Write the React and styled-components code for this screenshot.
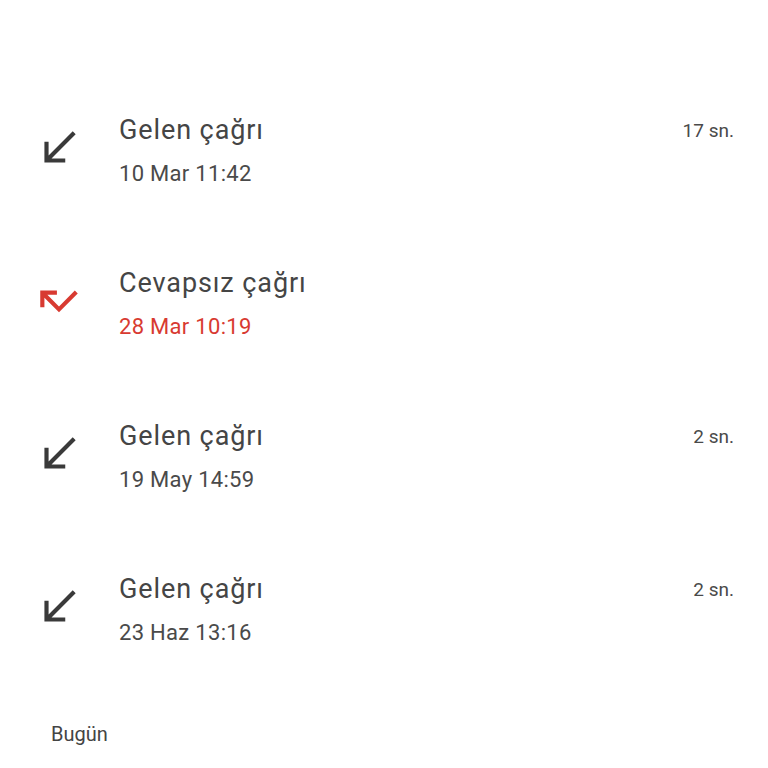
import React from 'react';
import styled, { createGlobalStyle } from 'styled-components';

const GlobalStyle = createGlobalStyle`
  html, body {
    margin: 0;
    padding: 0;
    background: #ffffff;
  }
  body {
    font-family: Roboto, "Noto Sans", sans-serif;
  }
`;

const PAGE = styled.div`
  width: 768px;
  height: 768px;
  box-sizing: border-box;
  padding: 75px 34px 0 34px;
  background: #ffffff;
  overflow: hidden;
`;

const ROW = styled.div`
  display: flex;
  align-items: center;
  height: 153px;
`;

const ICON = styled.svg`
  width: 50px;
  height: 50px;
  flex-shrink: 0;
  margin-right: 35px;
  margin-bottom: 7px;
  fill: ${(p) => (p.missed ? '#d83a31' : '#3a3a3a')};
`;

const BODY = styled.div`
  flex: 1;
  display: flex;
  flex-direction: column;
`;

const TOPLINE = styled.div`
  display: flex;
  justify-content: space-between;
  align-items: center;
  height: 43px;
`;

const TITLE = styled.span`
  font-size: 27px;
  color: #454545;
  letter-spacing: 0.9px;
`;

const DURATION = styled.span`
  font-size: 19px;
  color: #4a4a4a;
`;

const DATE = styled.div`
  font-size: 22px;
  line-height: 43px;
  color: ${(p) => (p.missed ? '#d83a31' : '#4a4a4a')};
  letter-spacing: 0.3px;
`;

const SECTION = styled.div`
  margin-top: 35px;
  padding-left: 17px;
  font-size: 20px;
  line-height: 24px;
  color: #444444;
`;

const calls = [
  { title: 'Gelen çağrı', date: '10 Mar 11:42', duration: '17 sn.' },
  { title: 'Cevapsız çağrı', date: '28 Mar 10:19', missed: true },
  { title: 'Gelen çağrı', date: '19 May 14:59', duration: '2 sn.' },
  { title: 'Gelen çağrı', date: '23 Haz 13:16', duration: '2 sn.' },
];

const CallIcon = ({ missed }) => (
  <ICON viewBox='0 0 24 24' missed={missed}>
    {missed ? (
      <path d='M19.59 7L12 14.59 6.41 9H11V7H3v8h2v-4.59l7 7 9-9z' />
    ) : (
      <path d='M20 5.41L18.59 4 7 15.59V9H5v10h10v-2H8.41z' />
    )}
  </ICON>
);

const App = () => {
  return (
    <PAGE>
      <GlobalStyle />
      {calls.map((c, i) => (
        <ROW key={i}>
          <CallIcon missed={c.missed} />
          <BODY>
            <TOPLINE>
              <TITLE>{c.title}</TITLE>
              {c.duration && <DURATION>{c.duration}</DURATION>}
            </TOPLINE>
            <DATE missed={c.missed}>{c.date}</DATE>
          </BODY>
        </ROW>
      ))}
      <SECTION>Bugün</SECTION>
    </PAGE>
  );
};

export default App;
